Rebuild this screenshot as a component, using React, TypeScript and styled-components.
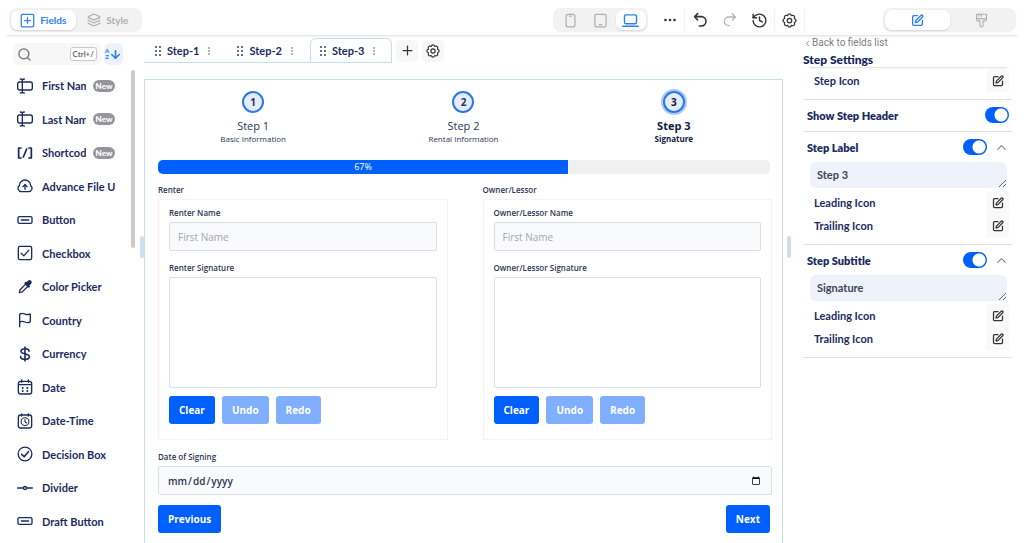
import React, { useState } from "react";
import styled, { createGlobalStyle, css } from "styled-components";
import {
  ArrowDown,
  ChevronLeft,
  ChevronUp,
  Flag,
  History,
  Layers,
  Pipette,
  Plus,
  Search,
  SquarePen,
} from "lucide-react";

const ui = `Lato, "Open Sans", sans-serif`;
const form = `"Open Sans", "Noto Sans", sans-serif`;
const navy = "#1c2b5f";
const ink = "#2c3654";
const blue = "#0060ff";
const line = "#dfe1e5";
const frame = "#c6dfea";

const GlobalStyle = createGlobalStyle`
  *, *::before, *::after { box-sizing: border-box; }
  body { margin: 0; background: #fff; color: ${navy}; font-family: ${ui}; }
  button, input, textarea { font-family: inherit; color: inherit; margin: 0; }
  button { border: 0; background: none; padding: 0; cursor: pointer; }
  svg { display: block; flex: none; }
`;

/* ---------- icons ---------- */

type GlyphProps = { size?: number; stroke?: number; children: React.ReactNode };

const Glyph = ({ size = 16, stroke = 2, children }: GlyphProps) => (
  <svg
    width={size}
    height={size}
    viewBox="0 0 24 24"
    fill="none"
    stroke="currentColor"
    strokeWidth={stroke}
    strokeLinecap="round"
    strokeLinejoin="round"
    aria-hidden="true"
  >
    {children}
  </svg>
);

const NameIcon = () => (
  <Glyph>
    <path d="M8 3v18M5 1.500c1.800 0 3 .5 3 2 0-1.500 1.200-2 3-2M5 22.500c1.800 0 3-.5 3-2 0 1.500 1.200 2 3 2" />
    <rect x="1" y="6" width="22" height="12" rx="3" />
  </Glyph>
);

const ShortcodeIcon = () => (
  <Glyph stroke={2.6}>
    <path d="M6 4.500H2.500v15H6M18 4.500h3.500v15H18M14.500 6l-5 12" />
  </Glyph>
);

const UploadIcon = () => (
  <Glyph>
    <path d="M6.500 20.500a5 5 0 0 1-3-9A8.500 8.500 0 0 1 12 3a8.500 8.500 0 0 1 8.500 8.500 5 5 0 0 1-3 9z" />
    <path d="M12 17v-6.500M9 13l3-3.200 3 3.200" />
  </Glyph>
);

const ButtonIcon = () => (
  <Glyph>
    <rect x="1.500" y="7" width="21" height="10" rx="2" />
    <path d="M6.500 12h11" />
  </Glyph>
);

const CheckboxIcon = () => (
  <Glyph>
    <rect x="2" y="2" width="20" height="20" rx="2.500" />
    <path d="M6.500 12.500l3.800 3.800 7.500-8.600" />
  </Glyph>
);

const PipetteIcon = () => (
  <Glyph>
    <path d="M3.500 20.500l1.200-4.500L13 7.700l3.300 3.300L8 19.300z" />
    <path d="M12 6.500l5.500 5.500 1.200-1.200-1.200-1.300 3.200-3.200a2.300 2.300 0 0 0-3.200-3.200l-3 3L13.200 5z" fill="currentColor" />
  </Glyph>
);

const DollarIcon = () => (
  <Glyph stroke={2.4}>
    <path d="M12 1.500v21M18 8c0-2.500-2.500-3.800-6-3.800S6 5.600 6 8c0 5.500 12.500 2.500 12.500 8 0 2.500-2.700 3.900-6.500 3.900S5.500 18.500 5.500 16" />
  </Glyph>
);

const CalendarIcon = () => (
  <Glyph>
    <rect x="2" y="3.500" width="20" height="19" rx="3.500" />
    <path d="M2.500 8.500h19M7 1.500v3.500M17 1.500v3.500" />
    <path d="M8.500 13.500h.01M15.500 13.500h.01M8.500 18h.01M15.500 18h.01" strokeWidth="3" />
  </Glyph>
);

const CalendarClockIcon = () => (
  <Glyph>
    <rect x="2" y="3" width="20" height="19.500" rx="3.500" />
    <path d="M7 1.500v3M17 1.500v3" />
    <circle cx="12" cy="13" r="5.800" strokeWidth="1.700" />
    <path d="M12 10v3.200l2.200 1.800" strokeWidth="1.700" />
  </Glyph>
);

const DecisionIcon = () => (
  <Glyph>
    <circle cx="12" cy="12" r="10.300" />
    <path d="M7 12.500l3.700 3.700 6.500-7.700" strokeWidth="2.400" />
  </Glyph>
);

const DividerIcon = () => (
  <Glyph>
    <path d="M1 12h8.500M14.500 12H23" />
    <circle cx="12" cy="12" r="2.300" />
  </Glyph>
);

const FieldsIcon = () => (
  <Glyph size={15}>
    <rect x="2" y="2" width="20" height="20" rx="2.500" />
    <path d="M12 7.500v9M7.500 12h9" />
  </Glyph>
);

const PhoneIcon = () => (
  <Glyph size={15}>
    <rect x="5" y="2" width="14" height="20" rx="3" />
    <path d="M10.500 5h3" />
  </Glyph>
);

const TabletIcon = () => (
  <Glyph size={15}>
    <rect x="3" y="2" width="18" height="20" rx="2.500" />
    <path d="M10 18.500h4" />
  </Glyph>
);

const LaptopIcon = () => (
  <Glyph size={17}>
    <rect x="3.500" y="4" width="17" height="12.500" rx="2" />
    <path d="M1 20h22" />
  </Glyph>
);

const UndoIcon = () => (
  <Glyph size={16} stroke={2.4}>
    <path d="M8.500 2.500L4 7l4.500 5M4.500 7H14a6.800 6.800 0 0 1 0 14h-3" />
  </Glyph>
);

const RedoIcon = () => (
  <Glyph size={16}>
    <path d="M15.500 3L20 7.500 15.500 12M19.500 7.500H10a6.500 6.500 0 0 0 0 13h1" />
  </Glyph>
);

const GearIcon = ({ size = 15 }: { size?: number }) => (
  <Glyph size={size}>
    <path d="M12 1.500Q14 1.500 15.200 4.200Q18 3.200 19.400 4.600T19.800 8.800Q22.500 10 22.500 12T19.800 15.200Q20.800 18 19.400 19.400T15.200 19.800Q14 22.500 12 22.500T8.800 19.800Q6 20.800 4.600 19.400T4.200 15.200Q1.500 14 1.500 12T4.200 8.800Q3.200 6 4.600 4.600T8.800 4.200Q10 1.500 12 1.500z" />
    <circle cx="12" cy="12" r="3.600" />
  </Glyph>
);

const BrushIcon = () => (
  <Glyph size={15} stroke={1.8}>
    <path d="M4 2h16v7H4zM8 2v3M12 2v3M4 9l1 3.500h4.500V20c0 3 5 3 5 0v-7.500H19L20 9" />
  </Glyph>
);

const GripIcon = () => (
  <svg width="6" height="10" viewBox="0 0 6 10" fill="currentColor" aria-hidden="true">
    {[1, 5, 9].map((y) => (
      <React.Fragment key={y}>
        <circle cx="1" cy={y} r="0.900" />
        <circle cx="5" cy={y} r="0.900" />
      </React.Fragment>
    ))}
  </svg>
);

const KebabIcon = () => (
  <svg width="2" height="8" viewBox="0 0 2 8" fill="currentColor" aria-hidden="true">
    <circle cx="1" cy="1" r="0.700" />
    <circle cx="1" cy="4" r="0.700" />
    <circle cx="1" cy="7" r="0.700" />
  </svg>
);

const MoreIcon = () => (
  <svg width="12" height="4" viewBox="0 0 12 4" fill="currentColor" aria-hidden="true">
    <circle cx="1.500" cy="2" r="1.300" />
    <circle cx="6" cy="2" r="1.300" />
    <circle cx="10.500" cy="2" r="1.300" />
  </svg>
);

/* ---------- page ---------- */

const Page = styled.div`
  display: flex;
  flex-direction: column;
  height: 100vh;
  overflow: hidden;
`;

const TopBar = styled.header`
  display: flex;
  align-items: center;
  flex: none;
  height: 36px;
  margin: 0 7px;
  padding: 5px 1px 0 2px;
  border-bottom: 1px solid #e6e7e9;
  box-shadow: 0 2px 2px -1px #f0f0f1;
`;

const Segments = styled.div<{ $width: number }>`
  display: flex;
  width: ${(p) => p.$width}px;
  height: 24px;
  padding: 2px;
  border-radius: 8px;
  background: #f2f2f3;
`;

const Segment = styled.button<{ $active?: boolean }>`
  display: flex;
  flex: 1;
  align-items: center;
  justify-content: center;
  gap: 5px;
  border-radius: 7px;
  color: #aeaeb0;
  font-size: 10px;
  font-weight: 700;
  ${(p) =>
    p.$active &&
    css`
      background: #fff;
      color: #2b7fee;
      box-shadow: 0 1px 2px #d4d5d8;
    `}
`;

const Tools = styled.div`
  display: flex;
  align-items: center;
  margin-left: auto;
`;

const ToolSpacer = styled.span`
  width: 7px;
`;

const ToolButton = styled.button<{ $faded?: boolean; $ruled?: boolean }>`
  display: flex;
  align-items: center;
  justify-content: center;
  width: 30px;
  height: 22px;
  color: ${(p) => (p.$faded ? "#b4b4b6" : "#33343a")};
  border-right: 1px solid ${(p) => (p.$ruled ? "#f1f1f3" : "transparent")};
`;

const ModeSwitch = styled.div`
  display: flex;
  justify-content: flex-end;
  width: 211px;
`;

const Body = styled.div`
  display: flex;
  flex: 1;
  min-height: 0;
`;

/* ---------- field library ---------- */

const Library = styled.aside`
  display: flex;
  flex-direction: column;
  flex: none;
  width: 136px;
  padding-top: 7px;
`;

const SearchRow = styled.div`
  display: flex;
  flex: none;
  gap: 3px;
  margin-left: 13px;
`;

const SearchBox = styled.label`
  display: flex;
  align-items: center;
  gap: 3px;
  width: 88px;
  height: 22px;
  padding: 0 4px;
  border-radius: 6px;
  background: #f7f7f8;
  color: #6b6b70;
`;

const SearchInput = styled.input`
  flex: 1;
  min-width: 0;
  border: 0;
  outline: 0;
  background: none;
  font-size: 11px;
`;

const Shortcut = styled.kbd`
  padding: 0 2px;
  border: 1px solid #c9c9cc;
  border-radius: 3px;
  background: #fff;
  font: 700 8px/12px ${ui};
`;

const SortButton = styled.button`
  display: flex;
  align-items: center;
  justify-content: center;
  width: 19px;
  height: 22px;
  border-radius: 6px;
  background: #edf3fc;
  color: #2b7fee;
`;

const SortLetters = styled.span`
  width: 4px;
  font-size: 6px;
  font-weight: 900;
  line-height: 6px;
`;

const LibraryScroll = styled.div`
  display: flex;
  flex: 1;
  min-height: 0;
  margin-top: 4px;
`;

const FieldList = styled.ul`
  display: flex;
  flex-direction: column;
  flex: 1;
  min-width: 0;
  margin: 0;
  padding: 0 16px 5px 17px;
  list-style: none;
`;

const FieldItem = styled.li`
  display: flex;
  flex: 1 0 32px;
  align-items: center;
  font-size: 11px;
  font-weight: 700;
`;

const FieldName = styled.span`
  flex: 1;
  min-width: 0;
  margin-left: 9px;
  overflow: hidden;
  white-space: nowrap;
`;

const NewTag = styled.span`
  width: 22px;
  margin-left: 7px;
  border-radius: 6px;
  background: #96969a;
  color: #fff;
  font-size: 8px;
  font-weight: 900;
  line-height: 12px;
  text-align: center;
`;

const ScrollThumb = styled.div`
  width: 4px;
  height: 178px;
  margin: 1px 1px 0 0;
  border-radius: 2px;
  background: #cacaca;
`;

const Handle = styled.div`
  flex: none;
  align-self: flex-start;
  width: 4px;
  height: 22px;
  margin: 200px 0 0 4px;
  border-radius: 2px;
  background: #cfdeec;
`;

/* ---------- canvas ---------- */

const Workspace = styled.main`
  display: flex;
  flex-direction: column;
  flex: 1;
  min-width: 0;
  padding-top: 2px;
`;

const TabBar = styled.div`
  display: flex;
  align-items: center;
  gap: 4px;
  flex: none;
  height: 25px;
`;

const Tabs = styled.div`
  display: flex;
  align-self: stretch;
  padding-left: 1px;
  border-bottom: 1px solid ${frame};
`;

const Tab = styled.div<{ $active?: boolean }>`
  display: flex;
  align-items: center;
  padding: 0 16px 0 9px;
  border: 1px solid ${(p) => (p.$active ? frame : "transparent")};
  border-bottom: 0;
  border-radius: 6px 6px 0 0;
`;

const TabName = styled.button`
  margin: 0 9px 0 6px;
  font-size: 11px;
  font-weight: 700;
`;

const SquareButton = styled.button`
  display: flex;
  align-items: center;
  justify-content: center;
  width: 22px;
  height: 22px;
  border-radius: 5px;
  background: #f7f7f7;
  color: #33343a;
`;

const Canvas = styled.form`
  flex: 1;
  margin-top: 16px;
  padding: 11px 3px 0;
  border: 1px solid ${frame};
  border-bottom: 0;
  color: ${ink};
  font-family: ${form};
`;

const Steps = styled.ol`
  display: grid;
  grid-template-columns: repeat(3, 1fr);
  margin: 0;
  padding: 0;
  list-style: none;
`;

const StepItem = styled.li<{ $current?: boolean }>`
  display: flex;
  flex-direction: column;
  align-items: center;
  font-weight: ${(p) => (p.$current ? 700 : 400)};
  color: ${(p) => (p.$current ? "#0e1b3d" : ink)};
`;

const StepDot = styled.span<{ $current?: boolean }>`
  width: 22px;
  height: 22px;
  margin-bottom: 6px;
  border: 2px solid #2b78e8;
  border-radius: 50%;
  background: #e3edfd;
  box-shadow: ${(p) => (p.$current ? "0 0 0 2px #a9cbff" : "none")};
  font-size: 10px;
  font-weight: 700;
  line-height: 18px;
  text-align: center;
`;

const StepTitle = styled.span`
  font-size: 11px;
  line-height: 14px;
`;

const StepSubtitle = styled.span`
  font-size: 8px;
  line-height: 12px;
`;

const FormBody = styled.div`
  padding: 15px 7px 0 10px;
`;

const Progress = styled.div`
  height: 14px;
  margin-right: 2px;
  overflow: hidden;
  border-radius: 5px;
  background: #f0f0f1;
`;

const ProgressFill = styled.div`
  height: 100%;
  background: ${blue};
  color: #fff;
  font-size: 9px;
  line-height: 14px;
  text-align: center;
`;

const Columns = styled.div`
  display: grid;
  grid-template-columns: 1fr 1fr;
  gap: 35px;
  margin-top: 10px;
`;

const labelText = css`
  display: block;
  font-size: 8px;
  font-weight: 600;
  line-height: 12px;
`;

const Group = styled.section`
  min-width: 0;
`;

const GroupTitle = styled.h3`
  ${labelText}
  margin: 0 0 3px;
`;

const GroupBox = styled.div`
  padding: 7px 10px 15px;
  border: 1px solid #f3f3f5;
`;

const Label = styled.label`
  ${labelText}
  margin-bottom: 3px;
`;

const TextInput = styled.input`
  display: block;
  width: 100%;
  height: 29px;
  padding: 0 8px;
  border: 1px solid #dcdfe3;
  border-radius: 2px;
  background: #f9fafc;
  font-size: 10px;
  font-weight: 600;
  &::placeholder {
    color: #a3a7ae;
    font-weight: 500;
  }
`;

const SignatureLabel = styled.span`
  ${labelText}
  margin: 11px 0 3px;
`;

const SignaturePad = styled.canvas`
  display: block;
  width: 100%;
  height: 111px;
  border: 1px solid #dcdfe3;
  border-radius: 2px;
`;

const ButtonRow = styled.div`
  display: flex;
  gap: 7px;
  margin-top: 8px;
`;

const FormButton = styled.button`
  height: 28px;
  padding: 0 10px;
  border-radius: 3px;
  background: ${blue};
  color: #fff;
  font-size: 10px;
  font-weight: 700;
  &:disabled {
    background: #80afff;
    cursor: default;
  }
`;

const DateField = styled.div`
  margin-top: 11px;
`;

const NavRow = styled.div`
  display: flex;
  justify-content: space-between;
  margin: 10px 2px 0 0;
`;

/* ---------- settings ---------- */

const Settings = styled.aside`
  flex: none;
  width: 233px;
  padding: 0 12px;
`;

const BackLink = styled.a`
  display: flex;
  align-items: center;
  height: 14px;
  color: #7e7e83;
  font: 10px/14px Roboto, sans-serif;
  text-decoration: none;
`;

const SettingsTitle = styled.h2`
  margin: 3px 0 0;
  font-size: 12px;
  font-weight: 900;
  line-height: 14px;
  color: #12215a;
`;

const Section = styled.section<{ $flat?: boolean }>`
  padding-bottom: ${(p) => (p.$flat ? 1 : 7)}px;
  border-bottom: 1px solid ${line};
`;

const TitleRule = styled.div`
  height: 2px;
  margin: 0 5px 0 7px;
  border-top: 1px solid #e4e5e8;
  background: #f8f8f9;
`;

const SectionHead = styled.div`
  display: flex;
  align-items: center;
  height: 30px;
  padding: 0 3px 0 4px;
`;

const SectionName = styled.label`
  flex: 1;
  font-size: 11px;
  font-weight: 800;
`;

const Toggle = styled.input`
  appearance: none;
  width: 24px;
  height: 16px;
  border-radius: 8px;
  background: radial-gradient(circle at 16px 8px, #fff 6px, ${blue} 7px);
  cursor: pointer;
  &:not(:checked) {
    background: radial-gradient(circle at 8px 8px, #fff 6px, #b9bcc2 7px);
  }
`;

const FoldButton = styled.button`
  margin-left: 7px;
  color: #85858a;
`;

const SettingText = styled.textarea`
  display: block;
  width: calc(100% - 12px);
  height: 26px;
  margin: 0 5px 3px 7px;
  padding: 6px 7px;
  border: 0;
  border-radius: 6px;
  background: #edf2fb;
  color: #3f4657;
  font-size: 11px;
  font-weight: 700;
  line-height: 14px;
  overflow: hidden;
`;

const IconSetting = styled.div`
  display: flex;
  align-items: center;
  justify-content: space-between;
  padding: 0 3px 0 11px;
  font-size: 11px;
  font-weight: 700;
`;

const EditButton = styled(SquareButton)`
  width: 23px;
  height: 23px;
  border-radius: 2px;
  background: #f9f9f9;
`;

type Field = { name: string; icon: React.ReactNode; isNew?: boolean };

const fields: Field[] = [
  { name: "First Name", icon: <NameIcon />, isNew: true },
  { name: "Last Name", icon: <NameIcon />, isNew: true },
  { name: "Shortcode", icon: <ShortcodeIcon />, isNew: true },
  { name: "Advance File Upload", icon: <UploadIcon /> },
  { name: "Button", icon: <ButtonIcon /> },
  { name: "Checkbox", icon: <CheckboxIcon /> },
  { name: "Color Picker", icon: <PipetteIcon /> },
  { name: "Country", icon: <Flag size={16} /> },
  { name: "Currency", icon: <DollarIcon /> },
  { name: "Date", icon: <CalendarIcon /> },
  { name: "Date-Time", icon: <CalendarClockIcon /> },
  { name: "Decision Box", icon: <DecisionIcon /> },
  { name: "Divider", icon: <DividerIcon /> },
  { name: "Draft Button", icon: <ButtonIcon /> },
];

const steps = [
  { title: "Step 1", subtitle: "Basic Information" },
  { title: "Step 2", subtitle: "Rental Information" },
  { title: "Step 3", subtitle: "Signature" },
];

const IconRow = ({ name }: { name: string }) => (
  <IconSetting>
    {name}
    <EditButton type="button" aria-label={`Edit ${name}`}>
      <SquarePen size={12} strokeWidth={2.5} />
    </EditButton>
  </IconSetting>
);

const TextSection = ({ id, name, initial }: { id: string; name: string; initial: string }) => (
  <Section>
    <SectionHead>
      <SectionName htmlFor={id}>{name}</SectionName>
      <Toggle id={id} type="checkbox" role="switch" defaultChecked />
      <FoldButton type="button" aria-label={`Collapse ${name}`}>
        <ChevronUp size={15} strokeWidth={1.8} />
      </FoldButton>
    </SectionHead>
    <SettingText aria-label={`${name} text`} defaultValue={initial} />
    <IconRow name="Leading Icon" />
    <IconRow name="Trailing Icon" />
  </Section>
);

const PartyGroup = ({ id, name }: { id: string; name: string }) => (
  <Group>
    <GroupTitle>{name}</GroupTitle>
    <GroupBox>
      <Label htmlFor={id}>{name} Name</Label>
      <TextInput id={id} placeholder="First Name" />
      <SignatureLabel id={`${id}-sign`}>{name} Signature</SignatureLabel>
      <SignaturePad aria-labelledby={`${id}-sign`} />
      <ButtonRow>
        <FormButton type="button">Clear</FormButton>
        <FormButton type="button" disabled>Undo</FormButton>
        <FormButton type="button" disabled>Redo</FormButton>
      </ButtonRow>
    </GroupBox>
  </Group>
);

export default function App() {
  const [current, setCurrent] = useState(2);

  return (
    <Page>
      <GlobalStyle />
      <TopBar>
        <Segments $width={133}>
          <Segment $active><FieldsIcon />Fields</Segment>
          <Segment><Layers size={14} />Style</Segment>
        </Segments>
        <Tools>
          <Segments $width={95}>
            <Segment aria-label="Phone"><PhoneIcon /></Segment>
            <Segment aria-label="Tablet"><TabletIcon /></Segment>
            <Segment aria-label="Laptop" $active><LaptopIcon /></Segment>
          </Segments>
          <ToolSpacer />
          <ToolButton aria-label="More" $ruled><MoreIcon /></ToolButton>
          <ToolButton aria-label="Undo"><UndoIcon /></ToolButton>
          <ToolButton aria-label="Redo" $faded><RedoIcon /></ToolButton>
          <ToolButton aria-label="History" $ruled><History size={17} /></ToolButton>
          <ToolButton aria-label="Form settings" $ruled><GearIcon /></ToolButton>
        </Tools>
        <ModeSwitch>
          <Segments $width={133}>
            <Segment $active aria-label="Edit"><SquarePen size={13} strokeWidth={2.4} /></Segment>
            <Segment aria-label="Design"><BrushIcon /></Segment>
          </Segments>
        </ModeSwitch>
      </TopBar>

      <Body>
        <Library>
          <SearchRow>
            <SearchBox>
              <Search size={15} />
              <SearchInput aria-label="Search fields" />
              <Shortcut>Ctrl+/</Shortcut>
            </SearchBox>
            <SortButton aria-label="Sort A to Z">
              <SortLetters>A Z</SortLetters>
              <ArrowDown size={13} strokeWidth={3} />
            </SortButton>
          </SearchRow>
          <LibraryScroll>
            <FieldList>
              {fields.map((f) => (
                <FieldItem key={f.name}>
                  {f.icon}
                  <FieldName>{f.name}</FieldName>
                  {f.isNew && <NewTag>New</NewTag>}
                </FieldItem>
              ))}
            </FieldList>
            <ScrollThumb />
          </LibraryScroll>
        </Library>
        <Handle />

        <Workspace>
          <TabBar>
            <Tabs>
              {[0, 1, 2].map((i) => (
                <Tab key={i} $active={i === current}>
                  <GripIcon />
                  <TabName type="button" onClick={() => setCurrent(i)}>Step-{i + 1}</TabName>
                  <KebabIcon />
                </Tab>
              ))}
            </Tabs>
            <SquareButton aria-label="Add step"><Plus size={15} /></SquareButton>
            <SquareButton aria-label="Step settings"><GearIcon size={14} /></SquareButton>
          </TabBar>

          <Canvas>
            <Steps>
              {steps.map((s, i) => (
                <StepItem key={s.title} $current={i === current}>
                  <StepDot $current={i === current}>{i + 1}</StepDot>
                  <StepTitle>{s.title}</StepTitle>
                  <StepSubtitle>{s.subtitle}</StepSubtitle>
                </StepItem>
              ))}
            </Steps>
            <FormBody>
              <Progress>
                <ProgressFill style={{ width: "67%" }}>67%</ProgressFill>
              </Progress>
              <Columns>
                <PartyGroup id="renter" name="Renter" />
                <PartyGroup id="owner" name="Owner/Lessor" />
              </Columns>
              <DateField>
                <Label htmlFor="signing">Date of Signing</Label>
                <TextInput id="signing" type="date" />
              </DateField>
              <NavRow>
                <FormButton type="button">Previous</FormButton>
                <FormButton type="button">Next</FormButton>
              </NavRow>
            </FormBody>
          </Canvas>
        </Workspace>
        <Handle />

        <Settings>
          <BackLink href="#fields"><ChevronLeft size={9} strokeWidth={2.5} />Back to fields list</BackLink>
          <SettingsTitle>Step Settings</SettingsTitle>
          <TitleRule />
          <Section>
            <IconRow name="Step Icon" />
          </Section>
          <Section $flat>
            <SectionHead>
              <SectionName htmlFor="show-header">Show Step Header</SectionName>
              <Toggle id="show-header" type="checkbox" role="switch" defaultChecked />
            </SectionHead>
          </Section>
          <TextSection id="step-label" name="Step Label" initial="Step 3" />
          <TextSection id="step-subtitle" name="Step Subtitle" initial="Signature" />
        </Settings>
      </Body>
    </Page>
  );
}
